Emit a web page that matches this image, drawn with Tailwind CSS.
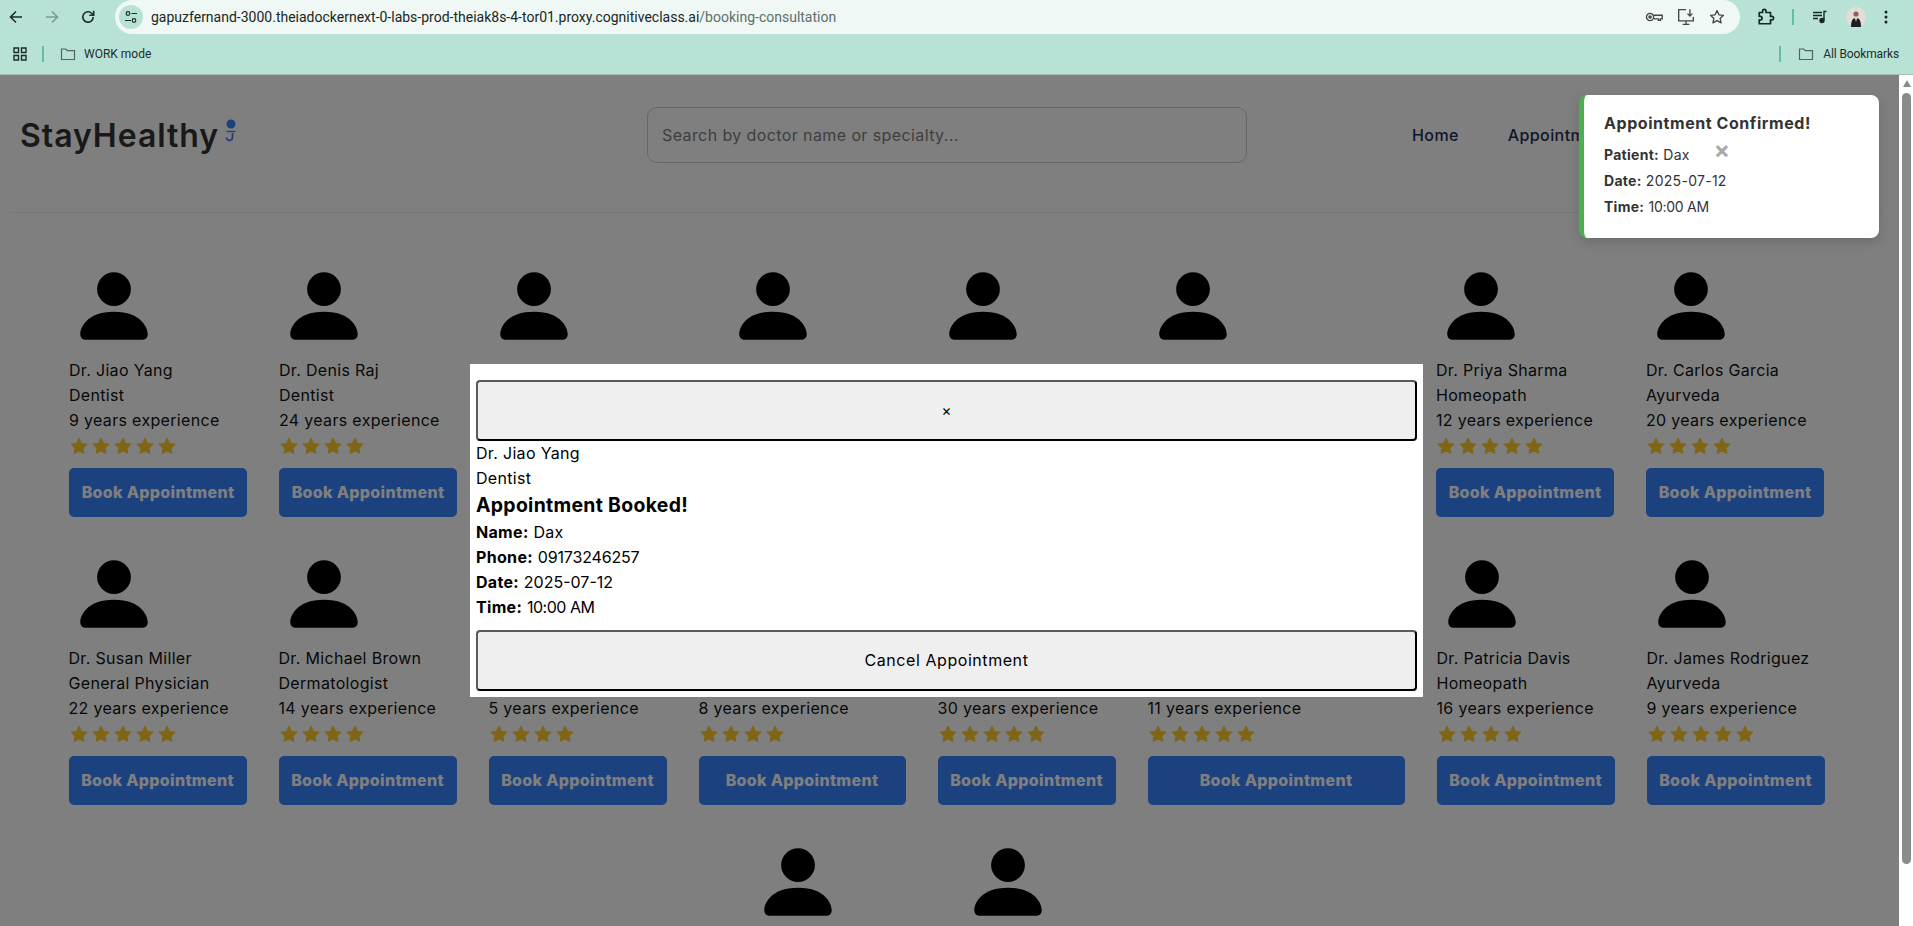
<!DOCTYPE html>
<html lang="en">
<head>
  <meta charset="UTF-8">
  <meta name="viewport" content="width=device-width, initial-scale=1.0">
  <script src="https://cdn.jsdelivr.net/npm/@tailwindcss/browser@4"></script>
  <title>StayHealthy - Booking Consultation</title>
</head>
<body class="h-[926px] overflow-hidden bg-white font-['Inter',sans-serif]">

  <!-- browser chrome -->
  <div class="h-[75px] bg-[#b8e2d6] border-b border-[#9fbfb5] font-['Roboto',sans-serif]">
    <div class="h-[34px] flex items-center">
      <div class="w-[115px] flex items-center pl-[8px] gap-[20px] text-[#1f2d2a]">
        <svg class="w-4 h-4" viewBox="0 0 16 16" fill="none" stroke="currentColor" stroke-width="1.6"><path d="M14 8H2.5M8 2.5 2.5 8 8 13.5"/></svg>
        <svg class="w-4 h-4 text-[#7b9a91]" viewBox="0 0 16 16" fill="none" stroke="currentColor" stroke-width="1.6"><path d="M2 8h11.5M8 2.5 13.5 8 8 13.5"/></svg>
        <svg class="w-4 h-4" viewBox="0 0 16 16" fill="none" stroke="currentColor" stroke-width="1.6"><path d="M13.2 8a5.2 5.2 0 1 1-1.5-3.7L13.5 6"/><path d="M13.7 1.8v4.4H9.3" /></svg>
      </div>
      <div class="w-[1625px] h-[34px] bg-[#eff8f5] rounded-full flex items-center pl-[4px]">
        <div class="w-[24px] h-[24px] rounded-full bg-[#b8e2d6] flex items-center justify-center">
          <svg class="w-[14px] h-[14px]" viewBox="0 0 14 14" fill="none" stroke="#1f2d2a" stroke-width="1.2"><circle cx="4" cy="3.5" r="1.8"/><path d="M7.5 3.5H13M1 10.5h6"/><circle cx="10" cy="10.5" r="1.8"/></svg>
        </div>
        <span class="ml-[8px] text-[14px] text-[#1a2623] whitespace-nowrap">gapuzfernand-3000.theiadockernext-0-labs-prod-theiak8s-4-tor01.proxy.cognitiveclass.ai<span class="text-[#5c6f6a]">/booking-consultation</span></span>
        <div class="ml-auto flex items-center gap-[14px] pr-[15px] text-[#3b4a46]">
          <svg class="w-[18px] h-[18px]" viewBox="0 0 16 16" fill="none" stroke="currentColor" stroke-width="1.2"><circle cx="4.5" cy="8" r="3.2"/><circle cx="4.5" cy="8" r="1" fill="currentColor"/><path d="M7.7 6.4h7.6v3.2h-1.6V11h-1.8V9.6H7.7"/></svg>
          <svg class="w-[18px] h-[18px]" viewBox="0 0 16 16" fill="none" stroke="currentColor" stroke-width="1.2"><path d="M8 1.5H1.5v10h13V8M5 14.5h6M8 11.5v3"/><path d="M11.5 1v6M9.3 5l2.2 2.2L13.7 5"/></svg>
          <svg class="w-4 h-4" viewBox="0 0 16 16" fill="none" stroke="currentColor" stroke-width="1.3" stroke-linejoin="round"><path d="m8 1.6 1.9 4.2 4.6.5-3.4 3.1 1 4.5L8 11.6l-4.1 2.3 1-4.500-3.400-3.100 4.600-.5z"/></svg>
        </div>
      </div>
      <div class="flex items-center pl-[17px]">
        <svg class="w-[18px] h-[18px]" viewBox="0 0 16 16" fill="none" stroke="#1a2623" stroke-width="1.5" stroke-linejoin="round"><path d="M2 4h3V2.800a1.500 1.500 0 0 1 3 0V4h4v3.500h1.200a1.500 1.500 0 0 1 0 3H12V14H2v-3.500h1a1.500 1.500 0 0 0 0-3H2z"/></svg>
        <div class="ml-[17px] w-[2px] h-[16px] bg-[#5fbf9f]"></div>
        <svg class="ml-[18px] w-4 h-4" viewBox="0 0 16 16" fill="none" stroke="#1a2623" stroke-width="1.4"><path d="M1 3.500h9M1 6.500h9M1 9.500h5M14.500 2.500H12v8.500"/><circle cx="10" cy="11.500" r="2" fill="#1a2623"/></svg>
        <svg class="ml-[18px] w-5 h-5" viewBox="0 0 20 20"><circle cx="10" cy="10" r="10" fill="#e4ded6"/><path d="M5 20c0-6 1.500-9 5-9s5 3 5 9z" fill="#1d1d22"/><path d="M9 11h2l-1 4z" fill="#f2f2f2"/><circle cx="10" cy="7" r="2.600" fill="#8a6650"/></svg>
        <svg class="ml-[18px] w-1 h-[14px]" viewBox="0 0 4 14" fill="#1a2623"><circle cx="2" cy="2" r="1.500"/><circle cx="2" cy="7" r="1.500"/><circle cx="2" cy="12" r="1.500"/></svg>
      </div>
    </div>
    <div class="h-[40px] flex items-center pl-[13px] pb-[1px] text-[12px] text-[#1f2d2a]">
      <svg class="w-[14px] h-[14px]" viewBox="0 0 14 14" fill="none" stroke="#1f2d2a" stroke-width="1.4"><path d="M1 1h4.500v4.500H1zM8.500 1H13v4.500H8.500zM1 8.500h4.500V13H1zM8.500 8.500H13V13H8.500z"/></svg>
      <div class="ml-[15px] w-[2px] h-[16px] bg-[#5fbf9f]"></div>
      <svg class="ml-[16px] w-4 h-4" viewBox="0 0 16 16" fill="none" stroke="#55635f" stroke-width="1.2"><path d="M1.500 3h4.300l1.500 1.700h7.200v8.800h-13z"/></svg>
      <span class="ml-[8px]">WORK mode</span>
      <div class="ml-auto w-[2px] h-[16px] bg-[#5fbf9f]"></div>
      <svg class="ml-[17px] w-4 h-4" viewBox="0 0 16 16" fill="none" stroke="#55635f" stroke-width="1.2"><path d="M1.500 3h4.300l1.500 1.700h7.200v8.800h-13z"/></svg>
      <span class="ml-[9px] mr-[14px] tracking-[-0.01em]">All Bookmarks</span>
    </div>
  </div>

  <div class="flex h-[851px]">
    <!-- page -->
    <div class="relative w-[1899px] h-full overflow-hidden">
      <header class="flex items-start h-[137px] pt-8 pl-5">
        <div class="w-[627px] h-14 flex items-center mt-[1px]">
          <span class="text-[32px] font-semibold tracking-[0.03em] text-[#333]">StayHealthy</span>
          <svg class="w-[11px] h-[24px] ml-[6px] -mt-[10px]" viewBox="0 0 10 24" fill="none" stroke="#3882ff" stroke-width="1.8"><circle cx="5.500" cy="5" r="4.500" fill="#3882ff" stroke="none"/><path d="M1 12.500h9" stroke-width="1.400"/><path d="M7 14v4.500a3 3 0 0 1-6 0"/></svg>
        </div>
        <input class="w-[600px] h-14 px-[14px] border border-[#ccc] rounded-[10px] text-base tracking-[0.025em] placeholder:text-[#7e7e7e]" placeholder="Search by doctor name or specialty..." />
        <nav class="ml-[165px] h-14 flex items-center gap-[49px] text-base tracking-[0.025em] text-[#1f2f50] font-medium whitespace-nowrap">
          <a>Home</a>
          <a>Appointments</a>
        </nav>
      </header>
      <div class="mx-[10px] w-[1872px] h-px bg-[#eee]"></div>

      <main id="doctors" class="w-[1893px] pt-12 flex flex-wrap justify-center gap-x-8 gap-y-8"></main>

      <!-- dimmed backdrop with the booking modal -->
      <div class="absolute inset-0 bg-black/50">
        <div class="absolute left-[470px] top-[289px] w-[953px] bg-white px-[6px] pt-4 pb-[6px] text-black text-base leading-[25px] tracking-[0.02em]">
          <button class="block w-full h-[61px] bg-[#efefef] border-2 border-t-[#5a5a5a] border-l-[#5a5a5a] border-r-black border-b-black rounded-[4px] text-[15px]">×</button>
          <p>Dr. Jiao Yang</p>
          <p>Dentist</p>
          <h3 class="text-[19.4px] font-bold leading-[29px]">Appointment Booked!</h3>
          <p><strong>Name:</strong> Dax</p>
          <p><strong>Phone:</strong> <span class="tracking-[-0.01em]">09173246257</span></p>
          <p><strong>Date:</strong> <span class="tracking-normal">2025-07-12</span></p>
          <p><strong>Time:</strong> <span class="tracking-[-0.03em]">10:00 AM</span></p>
          <button class="block w-full h-[61px] mt-[10px] bg-[#efefef] border-2 border-t-[#5a5a5a] border-l-[#5a5a5a] border-r-black border-b-black rounded-[4px] tracking-[0.035em]">Cancel Appointment</button>
        </div>
      </div>

      <!-- toast -->
      <div class="absolute top-5 right-5 w-[300px] h-[143px] bg-white rounded-lg border-l-[5px] border-[#4caf50] pl-5 pt-4 shadow-[0_4px_12px_rgba(0,0,0,0.15)] text-[#333] text-sm leading-[26px] tracking-[0.02em]">
        <h4 class="text-base font-bold leading-6 mb-[7px] tracking-[0.035em]">Appointment Confirmed!</h4>
        <p><strong class="font-bold">Patient:</strong> Dax</p>
        <p><strong class="font-bold">Date:</strong> 2025-07-12</p>
        <p><strong class="font-bold">Time:</strong> <span class="tracking-[-0.02em]">10:00 AM</span></p>
        <span class="absolute left-[128px] top-[45px] w-5 h-5 flex items-center justify-center text-2xl font-bold text-[#aaa]">×</span>
      </div>
    </div>

    <!-- scrollbar -->
    <div class="w-[14px] h-full bg-white flex flex-col items-center pl-[1px]">
      <svg class="w-2 h-[7px] mt-[5px]" viewBox="0 0 8 7" fill="#8b8b8b"><path d="M4 0 8 7H0z"/></svg>
      <div class="w-[9px] h-[771px] mt-[6px] rounded-full bg-[#8b8b8b]"></div>
    </div>
  </div>

  <script>
    // width of each card follows its longest line in the real app
    const doctors = [
      { w: 178, name: "Dr. Jiao Yang", spec: "Dentist", exp: 9, stars: 5 },
      { w: 178, name: "Dr. Denis Raj", spec: "Dentist", exp: 24, stars: 4 },
      { w: 207, covered: true }, { w: 178, covered: true }, { w: 178, covered: true }, { w: 256, covered: true },
      { w: 178, name: "Dr. Priya Sharma", spec: "Homeopath", exp: 12, stars: 5 },
      { w: 178, name: "Dr. Carlos Garcia", spec: "Ayurveda", exp: 20, stars: 4 },
      { w: 178, name: "Dr. Susan Miller", spec: "General Physician", exp: 22, stars: 5 },
      { w: 178, name: "Dr. Michael Brown", spec: "Dermatologist", exp: 14, stars: 4 },
      { w: 178, exp: 5, stars: 4 },
      { w: 207, exp: 8, stars: 4 },
      { w: 178, exp: 30, stars: 5 },
      { w: 257, exp: 11, stars: 5 },
      { w: 178, name: "Dr. Patricia Davis", spec: "Homeopath", exp: 16, stars: 4 },
      { w: 178, name: "Dr. James Rodriguez", spec: "Ayurveda", exp: 9, stars: 5 },
      { w: 178, covered: true }, { w: 178, covered: true },
    ];

    const star = `<span class="w-[22px] flex justify-center"><svg class="w-[18px] h-[18px]" viewBox="0 0 24 24" fill="#ffcc2e" stroke="#ffcc2e" stroke-width="2" stroke-linejoin="round"><path d="m12 2 3.100 6.600 6.900.9-5 5 1.200 7-6.200-3.500-6.200 3.500 1.200-7-5-5 6.900-.9z"/></svg></span>`;
    const avatar = `<svg class="block w-[90px] h-[90px] mb-[7px]" viewBox="0 0 16 16" fill="black"><path d="M3 14s-1 0-1-1 1-4 6-4 6 3 6 4-1 1-1 1H3Zm5-6a3 3 0 1 0 0-6 3 3 0 0 0 0 6Z"/></svg>`;

    document.getElementById("doctors").innerHTML = doctors.map(d => d.covered
      // under the modal or below the fold, only the avatar shows
      ? `<div class="h-[256px]" style="width:${d.w}px">${avatar}</div>`
      : `
      <div class="h-[256px] text-base leading-[25px] tracking-[0.02em] text-[#111] whitespace-nowrap" style="width:${d.w}px">
        ${avatar}
        <div class="h-[25px]">${d.name || ""}</div>
        <div class="h-[25px]">${d.spec || ""}</div>
        <div class="h-[25px]">${d.exp} years experience</div>
        <div class="flex h-[25px] items-center -ml-px">${star.repeat(d.stars)}</div>
        <button class="block w-full h-[49px] mt-[10px] bg-[#3882ff] text-white font-extrabold rounded-[5px] tracking-[0.02em]">Book Appointment</button>
      </div>`).join("");
  </script>
</body>
</html>
